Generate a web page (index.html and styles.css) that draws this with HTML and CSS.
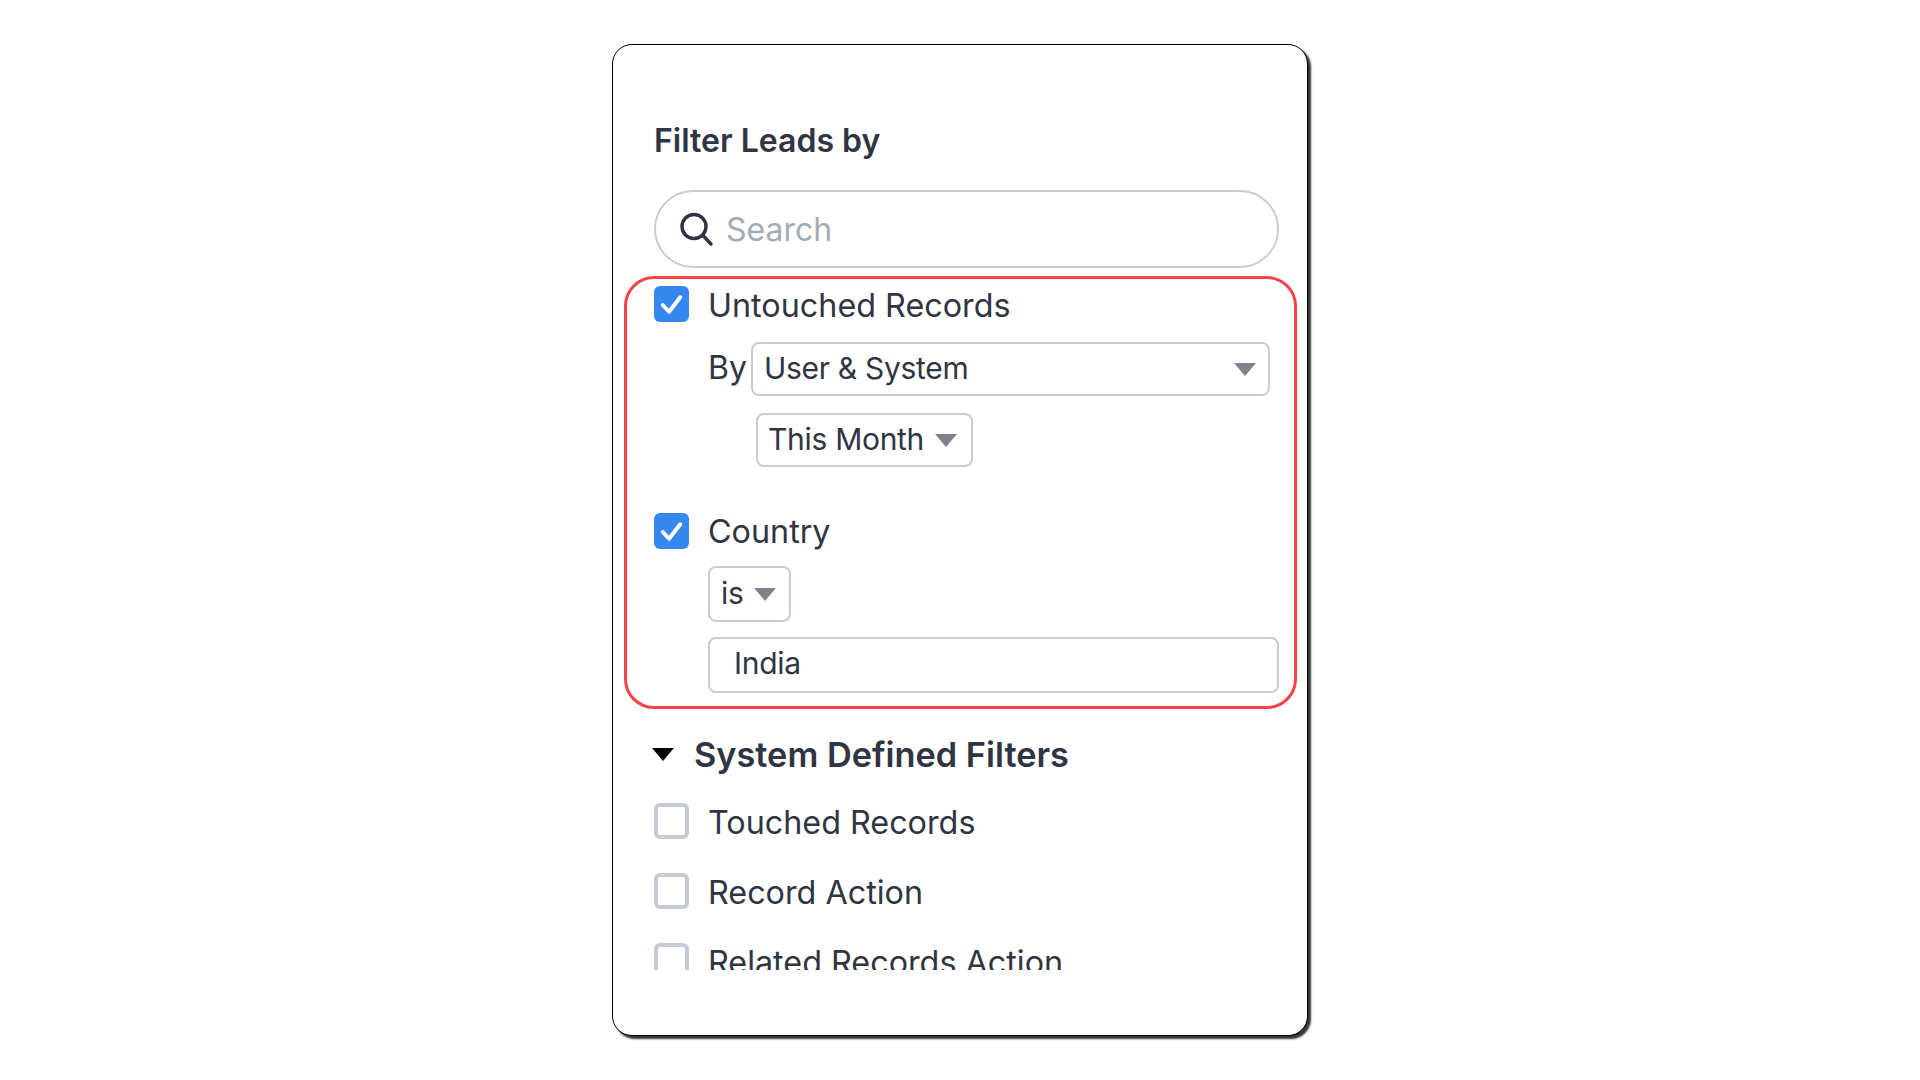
FILE: index.html
```html
<!DOCTYPE html>
<html lang="en">
<head>
<meta charset="utf-8">
<title>Filter Leads by</title>
<link rel="stylesheet" href="styles.css">
</head>
<body>
<main class="card">
  <h2 class="title">Filter Leads by</h2>
  <div class="search">
    <svg class="search-icon" viewBox="0 0 36 36" aria-hidden="true"><circle cx="16" cy="15.500" r="12" fill="none" stroke="#2f3542" stroke-width="3.400"/><path d="M25 24.500L33 33" fill="none" stroke="#2f3542" stroke-width="3.400" stroke-linecap="round"/></svg>
    <span class="placeholder">Search</span>
  </div>
  <div class="viewport">
    <section class="active">
      <div class="check-row">
        <span class="box on"><svg viewBox="0 0 36 36"><path d="M9 19l6.500 7L27 11" fill="none" stroke="#fff" stroke-width="4" stroke-linecap="round" stroke-linejoin="round"/></svg></span>
        <span class="label">Untouched Records</span>
      </div>
      <div class="by-row">
        <span class="label by">By</span>
        <div class="select grow"><span>User &amp; System</span><i class="caret"></i></div>
      </div>
      <div class="month-row">
        <div class="select month"><span>This Month</span><i class="caret"></i></div>
      </div>
      <div class="check-row country">
        <span class="box on"><svg viewBox="0 0 36 36"><path d="M9 19l6.500 7L27 11" fill="none" stroke="#fff" stroke-width="4" stroke-linecap="round" stroke-linejoin="round"/></svg></span>
        <span class="label">Country</span>
      </div>
      <div class="is-row">
        <div class="select is"><span>is</span><i class="caret"></i></div>
      </div>
      <div class="value">India</div>
    </section>
    <h3 class="group"><i class="group-caret"></i>System Defined Filters</h3>
    <ul class="list">
      <li class="check-row"><span class="box"></span><span class="label">Touched Records</span></li>
      <li class="check-row"><span class="box"></span><span class="label">Record Action</span></li>
      <li class="check-row"><span class="box"></span><span class="label">Related Records Action</span></li>
    </ul>
  </div>
</main>
</body>
</html>
```
FILE: styles.css
```css
* { box-sizing: border-box; }
html, body { margin: 0; background: #fff; }
body {
  width: 1920px;
  height: 1080px;
  overflow: hidden;
  padding: 44px 0 0 612px;
  font-family: Inter, "Liberation Sans", sans-serif;
  color: #2f3542;
}
.card {
  width: 696px;
  height: 992px;
  padding: 76px 22px 0 41px;
  background: #fff;
  border: 1px solid #000;
  border-radius: 20px;
  box-shadow: 3px 3px 2px rgba(0,0,0,.8);
}
.title {
  margin: 0;
  font-size: 32px;
  line-height: 40px;
  font-weight: 600;
  color: #2f3542;
}
.search {
  display: flex;
  align-items: center;
  width: 625px;
  height: 78px;
  margin-top: 29px;
  padding-left: 22px;
  border: 2px solid #c8ccd4;
  border-radius: 39px;
}
.search-icon { width: 36px; height: 36px; }
.placeholder { margin-left: 12px; font-size: 32px; color: #a4abb8; }
.viewport { height: 702px; overflow: hidden; margin: 0 -19px 0 -30px; padding-top: 8px; }
.active {
  width: 673px;
  height: 433px;
  padding: 7px 0 0 27px;
  border: 3px solid #f64347;
  border-radius: 30px;
}
.check-row { display: flex; align-items: center; height: 36px; }
.box {
  flex: none;
  width: 35px;
  height: 36px;
  margin-right: 19px;
  border: 4px solid #c6cbd3;
  border-radius: 6px;
  background: #fff;
}
.box.on { border: 0; background: #3688f0; }
.box svg { display: block; width: 35px; height: 36px; }
.label { margin-top: 4px; font-size: 32.300px; line-height: 40px; color: #2f3542; white-space: nowrap; }
.country .label { margin-top: 2px; }
.by-row { display: flex; align-items: center; margin: 20px 0 0 54px; }
.by { margin: 0 4px 2px 0; font-size: 32px; }
.select {
  display: flex;
  align-items: center;
  justify-content: space-between;
  height: 54px;
  padding: 0 12px 2px 11px;
  font-size: 30px;
  letter-spacing: -.3px;
  white-space: nowrap;
  border: 2px solid #c8ccd4;
  border-radius: 8px;
  background: #fff;
}
.grow { width: 519px; }
.month-row { margin: 17px 0 0 102px; }
.month { width: 217px; padding: 0 14px 2px 10px; }
.caret {
  flex: none;
  width: 0;
  height: 0;
  margin-top: 2px;
  border-left: 11px solid transparent;
  border-right: 11px solid transparent;
  border-top: 13px solid #80838c;
}
.country { margin-top: 46px; }
.is-row { margin: 17px 0 0 54px; }
.is { width: 83px; height: 56px; padding-right: 13px; }
.value {
  display: flex;
  align-items: center;
  width: 571px;
  height: 56px;
  margin: 15px 0 0 54px;
  padding: 0 0 4px 24px;
  font-size: 30px;
  letter-spacing: -.3px;
  border: 2px solid #c8ccd4;
  border-radius: 8px;
}
.group {
  display: flex;
  align-items: center;
  height: 44px;
  margin: 23px 0 0 28px;
  font-size: 34.300px;
  font-weight: 600;
  color: #2f3542;
}
.group-caret {
  flex: none;
  width: 0;
  height: 0;
  margin-right: 20px;
  border-left: 11.500px solid transparent;
  border-right: 11.500px solid transparent;
  border-top: 13px solid #000;
}
.list { list-style: none; margin: 27px 0 0 30px; padding: 0; display: flex; flex-direction: column; gap: 34px; }
```
